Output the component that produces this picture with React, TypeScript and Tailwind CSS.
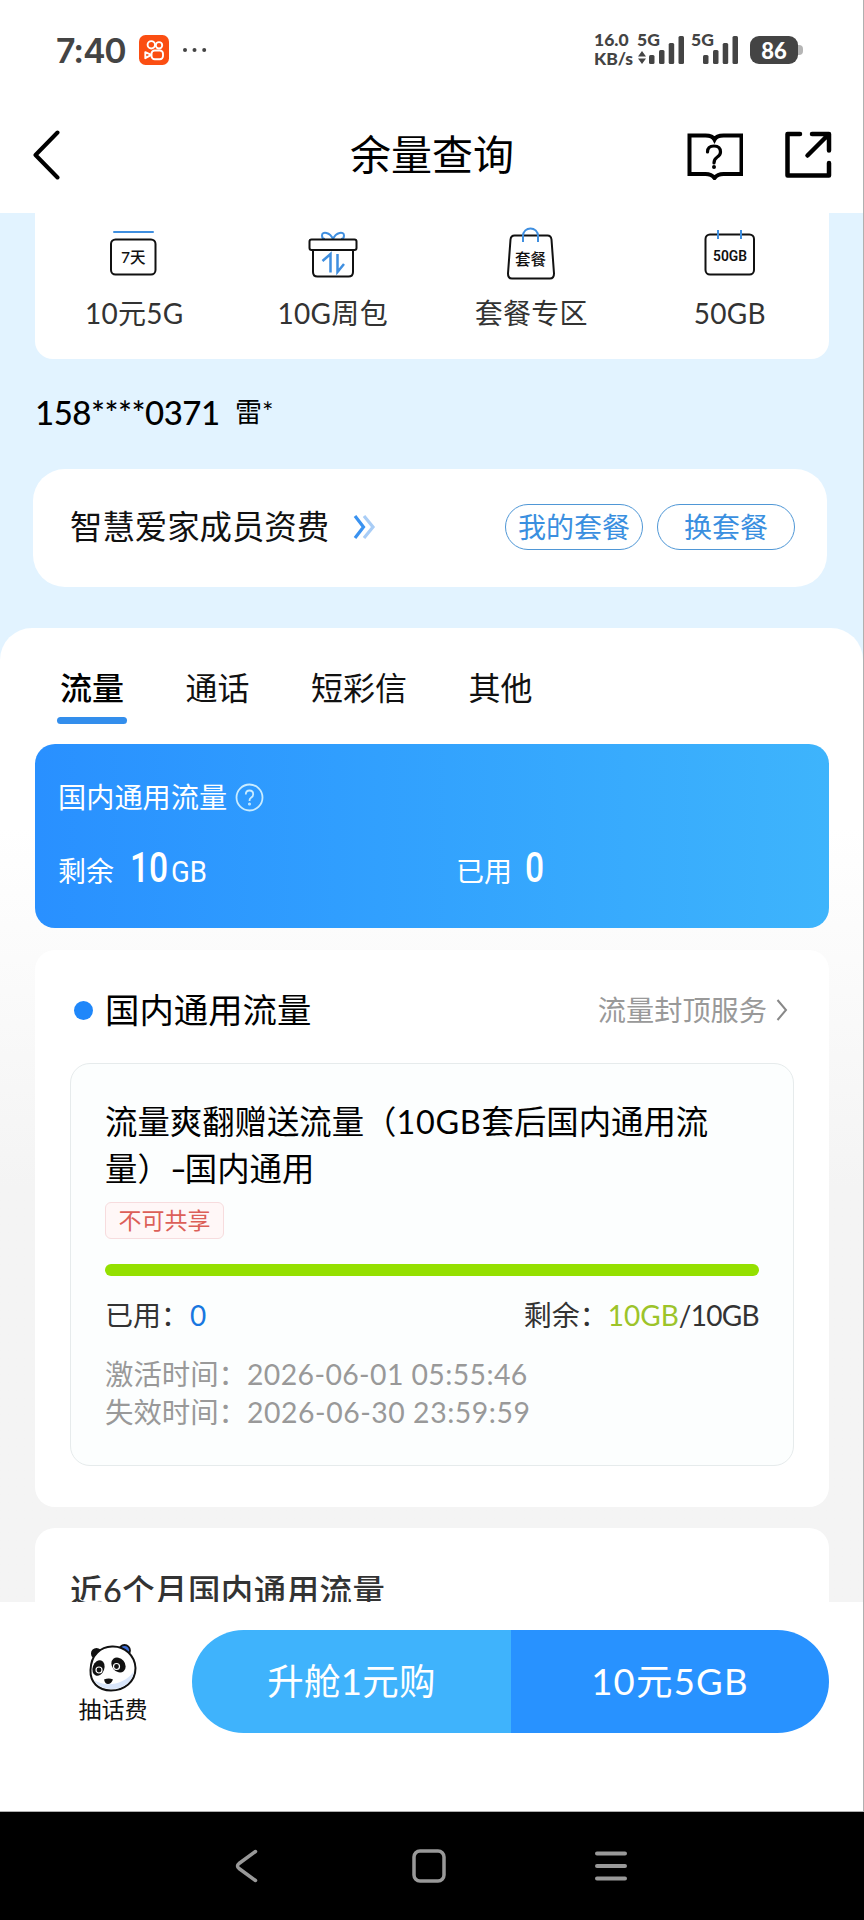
import React from 'react';

const BLUE = '#3f8fe0';

const SignalBars: React.FC = () => (
  <svg width="36" height="29" viewBox="0 0 36 29" fill="#444">
    <rect x="0" y="19" width="5.5" height="9" rx="1.5" />
    <rect x="10" y="14" width="5.5" height="14" rx="1.5" />
    <rect x="19.7" y="7" width="5.5" height="21" rx="1.5" />
    <rect x="29.5" y="0" width="5.5" height="28" rx="1.5" />
  </svg>
);

const StatusBar: React.FC = () => (
  <div className="flex h-[105px] pt-[33px] pl-[56px] pr-[65px] text-[#444]">
    <span className="mt-[1px] w-[83px] font-[Inter] text-[34px] leading-[34px] font-semibold tracking-[-1.2px]">7:40</span>
    <svg className="mt-[2px]" width="30" height="30" viewBox="0 0 30 30">
      <rect width="30" height="30" rx="6.5" fill="#fb4e12" />
      <g fill="none" stroke="#fff" strokeWidth="1.9" strokeLinejoin="round">
        <circle cx="12.3" cy="9.8" r="3.7" />
        <circle cx="20" cy="10.3" r="3.2" />
        <rect x="12.5" y="15.5" width="11.5" height="8.8" rx="3.2" />
        <path d="M12.3 19.8l-6-2.6v6z" />
      </g>
    </svg>
    <svg className="mt-[14px] ml-[13px]" width="26" height="6" viewBox="0 0 26 6" fill="#444">
      <circle cx="3" cy="3" r="2" />
      <circle cx="12.5" cy="3" r="2" />
      <circle cx="22.2" cy="3" r="2" />
    </svg>
    <div className="ml-auto flex font-[Lato] text-[17.5px] leading-[19px] font-black">
      <div className="-mt-[3px] w-[43px] whitespace-nowrap">
        <div>16.0</div>
        <div>KB/s</div>
      </div>
      <div className="-mt-[3px] w-[12px]">
        <div>5G</div>
        <svg className="mt-[2px] ml-[1px]" width="8" height="14" viewBox="0 0 8 14" fill="#444">
          <path d="M4 0l4 5.5H0zM4 13l4-5.5H0z" />
        </svg>
      </div>
      <div className="mt-[3px] w-[42px]">
        <SignalBars />
      </div>
      <div className="-mt-[3px] w-[12px]">5G</div>
      <div className="mt-[3px] w-[47px]">
        <SignalBars />
      </div>
      <div className="relative mt-[3px] flex h-[28px] w-[48px] items-center justify-center rounded-[9px] bg-[#444] text-[22px] text-white">
        86
        <span className="absolute top-[9px] -right-[5px] h-[10px] w-[5px] rounded-r bg-[#b5b5b5]" />
      </div>
    </div>
  </div>
);

const Header: React.FC = () => (
  <div className="flex h-[108px] items-center pb-[8px] pl-[33px] pr-[31px]">
    <svg width="28" height="50" viewBox="0 0 28 50" fill="none" stroke="#000" strokeWidth="4" strokeLinecap="round" strokeLinejoin="round">
      <path d="M24.5 2.5L2.5 25l22 22.5" />
    </svg>
    <h1 className="ml-[289px] w-[336px] text-[41px] leading-[50px] text-black">余量查询</h1>
    <svg className="mt-[2px]" width="57" height="48" viewBox="0 0 57 48" fill="none" stroke="#000" strokeWidth="4">
      <path d="M3.5 3.5h16q7 0 9 4q2-4 9-4h18v38.5h-18q-6 0-9 4q-3-4-9-4h-16z" />
      <path d="M21.5 20q0-6 6.500-6t6.500 6q0 3-3.200 5t-3.300 6" strokeWidth="3.2" strokeLinecap="round" />
      <circle cx="28" cy="35" r="1" strokeWidth="2" />
    </svg>
    <svg className="ml-auto" width="48" height="48" viewBox="0 0 48 48" fill="none" stroke="#000" strokeWidth="4.5" strokeLinecap="round" strokeLinejoin="round">
      <path d="M16 3H3.500v41.500h41.500V32" />
      <path d="M28 3h17v16.500M44 4L23.500 24.500" />
    </svg>
  </div>
);

const WeekIcon = () => (
  <svg width="50" height="56" viewBox="0 0 50 56" fill="none" strokeWidth="2">
    <path d="M5 8h39" stroke={BLUE} strokeLinecap="round" />
    <rect x="2" y="15.5" width="44.5" height="35" rx="4.5" stroke="#111" />
    <text x="24.3" y="39" fill="#111" fontSize="15.5" fontWeight="500" textAnchor="middle">7天</text>
  </svg>
);

const GiftIcon = () => (
  <svg width="50" height="56" viewBox="0 0 50 56" fill="none" strokeWidth="2">
    <path d="M25 15c-3-7-11-8-11-3.500c0 2 1 3.500 3 3.500M25 15c3-7 11-8 11-3.500c0 2-1 3.500-3 3.500" stroke={BLUE} />
    <rect x="1.5" y="15.5" width="47" height="10.5" rx="2" stroke="#111" />
    <path d="M5 26v22q0 4.500 4.500 4.500h31q4.500 0 4.500-4.500V26" stroke="#111" />
    <path d="M14.500 37l8-7v18.500M29.500 30v18l6.500-8" stroke={BLUE} strokeWidth="2.5" />
  </svg>
);

const BagIcon = () => (
  <svg width="50" height="56" viewBox="0 0 50 56" fill="none" strokeWidth="2">
    <path d="M8.500 11.500h33q3.500 0 4 4l2.500 34q0 5-4 5H6q-4 0-4-5l2.500-34q.5-4 4-4z" stroke="#111" />
    <path d="M17 18v-6c0-10 15-10 15 0v6" stroke={BLUE} />
    <text x="24.5" y="41" fill="#111" fontSize="15.5" fontWeight="500" textAnchor="middle">套餐</text>
  </svg>
);

const CalendarIcon = () => (
  <svg width="52" height="56" viewBox="0 0 52 56" fill="none" strokeWidth="2">
    <rect x="1.5" y="10.5" width="48.5" height="40" rx="4.5" stroke="#111" />
    <path d="M14 6v9M37 6v9" stroke={BLUE} />
    <text x="26" y="37" fill="#111" fontFamily="Roboto" fontSize="15.5" fontWeight="600" textAnchor="middle" textLength="34" lengthAdjust="spacingAndGlyphs">50GB</text>
  </svg>
);

const shortcuts = [
  { label: '10元5G', icon: <WeekIcon /> },
  { label: '10G周包', icon: <GiftIcon /> },
  { label: '套餐专区', icon: <BagIcon /> },
  { label: '50GB', icon: <CalendarIcon /> },
];

const Shortcuts: React.FC = () => (
  <div className="ml-[35px] mr-[34px] grid h-[146px] grid-cols-4 rounded-b-[18px] bg-white pt-[11px]">
    {shortcuts.map((item) => (
      <div key={item.label} className="flex flex-col items-center">
        {item.icon}
        <span className="mt-[15px] text-[28px] leading-[36px] tracking-[0.3px] text-[#333]">{item.label}</span>
      </div>
    ))}
  </div>
);

const PlanCard: React.FC = () => (
  <div className="ml-[33px] mr-[36px] mt-[30px] flex h-[118px] items-center rounded-[32px] bg-white pb-[2px] pl-[37px] pr-[32px]">
    <span className="text-[32.4px] leading-[40px] text-[#111]">智慧爱家成员资费</span>
    <svg className="ml-[23px]" width="26" height="26" viewBox="0 0 26 26" fill="none" strokeWidth="3.2">
      <path d="M12 2l9 11-9 11" stroke="#a9cdf6" />
      <path d="M3 2l8.500 11L3 24" stroke="#3a92f0" />
    </svg>
    <div className="ml-auto flex gap-[14px] text-[28px] leading-[44px] text-[#3a8fe0]">
      <span className="h-[46px] w-[138px] rounded-full border border-[#4f97d6] text-center">我的套餐</span>
      <span className="h-[46px] w-[138px] rounded-full border border-[#4f97d6] text-center">换套餐</span>
    </div>
  </div>
);

const Tabs: React.FC = () => (
  <div className="flex h-[116px] gap-[61.5px] pl-[60px] pt-[40px] text-[32px] leading-[40px] text-[#111]">
    <div className="relative font-medium text-black">
      流量
      <span className="absolute top-[49px] -left-[3px] h-[7px] w-[70px] rounded-full bg-[#338eec]" />
    </div>
    <div>通话</div>
    <div>短彩信</div>
    <div>其他</div>
  </div>
);

const SummaryCard: React.FC = () => (
  <div className="ml-[35px] mr-[34px] h-[184px] rounded-[20px] bg-linear-to-r from-[#2990ff] to-[#3eb4fc] pl-[23px] pt-[35px] text-white">
    <div className="flex items-center text-[28.2px] leading-[36px]">
      国内通用流量
      <svg className="ml-[8px]" width="29" height="29" viewBox="0 0 29 29" fill="none" stroke="#c9ecff" strokeWidth="1.8">
        <circle cx="14.5" cy="14.5" r="13" />
        <path d="M10.800 11.500q0-4 3.700-4t3.700 3.700q0 2-2 3.300t-1.700 3.500" />
        <circle cx="14.5" cy="21" r=".6" />
      </svg>
    </div>
    <div className="mt-[30px] grid grid-cols-[398px_1fr] text-[28px] leading-[46px]">
      <div className="flex items-baseline">
        剩余
        <span className="ml-[16px] inline-block w-[41px] origin-left scale-x-[0.8] font-[Roboto] text-[42px] font-medium">10</span>
        <span className="inline-block origin-left scale-x-[0.95] font-[Roboto] text-[29px]">GB</span>
      </div>
      <div className="flex items-baseline">
        已用
        <span className="ml-[13px] inline-block origin-left scale-x-[0.8] font-[Roboto] text-[42px] font-medium">0</span>
      </div>
    </div>
  </div>
);

const DetailCard: React.FC = () => (
  <div className="ml-[35px] mr-[34px] mt-[22px] h-[557px] rounded-[20px] bg-white px-[35px] pt-[36px]">
    <div className="flex h-[48px] items-center pl-[4px] pr-[6px]">
      <span className="size-[19px] rounded-full bg-[#1f87fa]" />
      <span className="ml-[12px] text-[34.4px] leading-[46px] text-black">国内通用流量</span>
      <span className="ml-auto text-[28.2px] text-[#999]">流量封顶服务</span>
      <svg className="ml-[9px]" width="12" height="24" viewBox="0 0 12 24" fill="none" stroke="#888" strokeWidth="2">
        <path d="M1.500 2L10 12 1.500 22" />
      </svg>
    </div>
    <div className="mt-[29px] h-[403px] rounded-[20px] border border-[#e6ebec] bg-[#fcfefe] px-[34px] pt-[35px]">
      <p className="text-[32.4px] leading-[46.5px] whitespace-nowrap text-black">
        流量爽翻赠送流量（<span className="tracking-[0.7px]">10GB</span>套后国内通用流
        <br />
        量）<span className="inline-block w-[15px] origin-left scale-x-[1.4]">-</span>国内通用
      </p>
      <div className="mt-[10px] h-[37px] w-[119px] rounded-[6px] border border-[#f7dcde] bg-[#fff7f7] text-center text-[23px] leading-[34px] text-[#dc5f58]">
        不可共享
      </div>
      <div className="mt-[25px] h-[12px] rounded-full bg-[#94e000]" />
      <div className="mt-[19px] flex justify-between text-[28px] leading-[40px] text-[#333]">
        <span>
          已用：<span className="ml-[1px] text-[#1877e0]">0</span>
        </span>
        <span>
          剩余：<span className="text-[#9cc42a]">10GB</span>
          <span className="tracking-[-0.7px]">/10GB</span>
        </span>
      </div>
      <div className="mt-[20px] text-[28.4px] leading-[38px] text-[#999]">
        <p>
          激活时间：<span className="tracking-[0.4px]">2026-06-01 05:55:46</span>
        </p>
        <p>
          失效时间：<span className="tracking-[0.55px]">2026-06-30 23:59:59</span>
        </p>
      </div>
    </div>
  </div>
);

const PandaIcon = () => (
  <svg width="48" height="48" viewBox="0 0 48 48">
    <circle cx="7.5" cy="9.5" r="5.5" fill="#111" />
    <circle cx="35.5" cy="6.5" r="5.5" fill="#3f6fd8" stroke="#111" strokeWidth="1.8" />
    <path d="M1.500 26C2 10 12 3 23 2.500C36 2 46 12 46.500 24C46.500 38 35 46.500 22 46.500C9 46.500 1 38 1.500 26z" fill="#fff" stroke="#111" strokeWidth="2" />
    <path d="M45 27c-2 12-11 18-23 18c-8 0-14-4-17-9c10 7 30 6 40-9z" fill="#d9e6fb" />
    <ellipse cx="9.5" cy="24" rx="5.8" ry="8" transform="rotate(20 9.5 24)" fill="#111" />
    <ellipse cx="29.5" cy="21" rx="6.5" ry="8" transform="rotate(-40 29.5 21)" fill="#111" />
    <circle cx="10" cy="26" r="3" fill="none" stroke="#fff" strokeWidth="1.2" />
    <circle cx="27.5" cy="22.5" r="3" fill="none" stroke="#fff" strokeWidth="1.2" />
    <path d="M15 35.500q5-2 9 0q-2 4.500-5 4.500t-4-4.500z" fill="#111" />
  </svg>
);

const BottomBar: React.FC = () => (
  <div className="flex h-[209px] bg-white pr-[34px] pt-[28px]">
    <div className="flex w-[192px] flex-col items-center pl-[34px] pt-[14px]">
      <PandaIcon />
      <span className="mt-[1px] text-[23px] leading-[32px] text-[#111]">抽话费</span>
    </div>
    <div className="flex h-[103px] flex-1 overflow-hidden rounded-full text-[36.5px] leading-[102px] text-white">
      <div className="w-[319px] bg-[#3fb3fc] text-center tracking-[0.3px]">升舱1元购</div>
      <div className="flex-1 bg-[#2892ff] text-center tracking-[1.2px]">10元5GB</div>
    </div>
  </div>
);

const SystemNav: React.FC = () => (
  <div className="flex h-[108px] items-center justify-center gap-[148px] bg-black pr-[7px]">
    <svg width="34" height="36" viewBox="0 0 34 36" fill="none" stroke="#999" strokeWidth="3.5" strokeLinecap="round" strokeLinejoin="round">
      <path d="M25.500 3.500L9 15.500q-3 2.500 0 5L25.500 32.500" />
    </svg>
    <svg width="34" height="36" viewBox="0 0 34 36" fill="none" stroke="#999" strokeWidth="3.5">
      <rect x="2" y="3" width="30" height="30" rx="6" />
    </svg>
    <svg width="34" height="36" viewBox="0 0 34 36" fill="none" stroke="#999" strokeWidth="4" strokeLinecap="round">
      <path d="M3 5.500h28M3 18h28M3 30.500h28" />
    </svg>
  </div>
);

export default function App() {
  return (
    <div className="flex h-[1920px] w-[864px] flex-col overflow-hidden bg-white font-[Lato,'Noto_Sans_CJK_SC',sans-serif]">
      <div className="flex h-[1812px] flex-col border-r border-b border-[#b0b0b0] bg-white">
        <StatusBar />
        <Header />
        <div className="h-[1389px] overflow-hidden bg-[#e2f3ff]">
          <Shortcuts />
          <div className="mt-[27px] flex h-[53px] items-center pl-[35px] text-black">
            <span className="w-[183px] text-[33px] font-medium tracking-[-0.5px]">158****0371</span>
            <span className="ml-[17px] text-[27px]">雷*</span>
          </div>
          <PlanCard />
          <div className="mt-[41px] h-[974px] rounded-t-[32px] bg-linear-to-b from-white from-[200px] to-[#f4f4f4] to-[560px]">
            <Tabs />
            <SummaryCard />
            <DetailCard />
            {/* history card, its lower part is hidden behind the bottom bar */}
            <div className="ml-[35px] mr-[34px] mt-[21px] h-[74px] overflow-hidden rounded-t-[20px] bg-white pl-[35px] pt-[39px]">
              <h2 className="text-[32.4px] leading-[48px] font-medium tracking-[0.5px] whitespace-nowrap text-[#333]">近6个月国内通用流量</h2>
            </div>
          </div>
        </div>
        <BottomBar />
      </div>
      <SystemNav />
    </div>
  );
}
